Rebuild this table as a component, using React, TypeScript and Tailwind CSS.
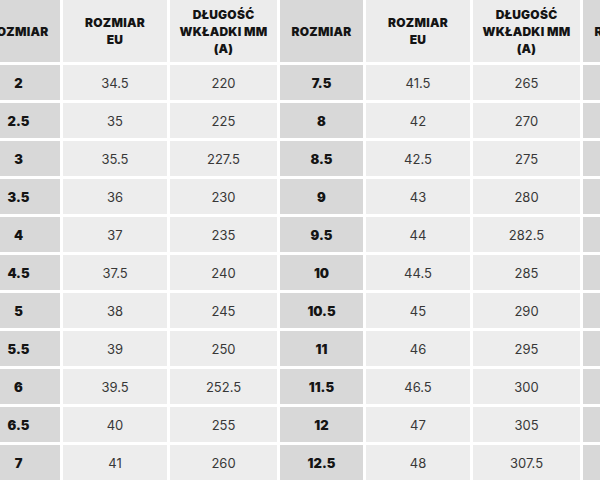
const rows: [string, string, string][][] = [
  [['2', '34.5', '220'], ['7.5', '41.5', '265'], ['13', '48.5', '310']],
  [['2.5', '35', '225'], ['8', '42', '270'], ['13.5', '49', '315']],
  [['3', '35.5', '227.5'], ['8.5', '42.5', '275'], ['14', '49.5', '320']],
  [['3.5', '36', '230'], ['9', '43', '280'], ['14.5', '50', '325']],
  [['4', '37', '235'], ['9.5', '44', '282.5'], ['15', '50.5', '330']],
  [['4.5', '37.5', '240'], ['10', '44.5', '285'], ['15.5', '51', '335']],
  [['5', '38', '245'], ['10.5', '45', '290'], ['16', '51.5', '340']],
  [['5.5', '39', '250'], ['11', '46', '295'], ['16.5', '52', '345']],
  [['6', '39.5', '252.5'], ['11.5', '46.5', '300'], ['17', '52.5', '350']],
  [['6.5', '40', '255'], ['12', '47', '305'], ['17.5', '53', '355']],
  [['7', '41', '260'], ['12.5', '48', '307.5'], ['18', '53.5', '360']],
];

const font = { fontFamily: 'Inter, "Liberation Sans", sans-serif' };

function HeaderGroup() {
  return (
    <>
      <div className="flex items-center justify-center bg-[#d8d8d8] text-center text-[12px] font-black leading-[17px] tracking-[0.02em] text-[#141414]">
        ROZMIAR
      </div>
      <div className="flex items-center justify-center bg-[#ececec] text-center text-[12px] font-black leading-[17px] tracking-[0.02em] text-[#141414]">
        ROZMIAR
        <br />
        EU
      </div>
      <div className="flex items-center justify-center bg-[#ececec] text-center text-[12px] font-black leading-[17px] tracking-[0.02em] text-[#141414]">
        DŁUGOŚĆ
        <br />
        WKŁADKI MM
        <br />
        (A)
      </div>
    </>
  );
}

export default function App() {
  return (
    <div className="h-[480px] w-[600px] overflow-hidden bg-white" style={font}>
      <div className="ml-[-23px] grid grid-cols-[83px_104px_107px_83px_104px_107px_83px_104px_107px] grid-rows-[62px] auto-rows-[35px] gap-[3px]">
        <HeaderGroup />
        <HeaderGroup />
        <HeaderGroup />
        {rows.map((row) =>
          row.map(([size, eu, mm]) => (
            <div key={size} className="contents">
              <div className="flex items-center justify-center bg-[#d8d8d8] pt-[3px] text-[13px] font-black text-[#141414]">
                {size}
              </div>
              <div className="flex items-center justify-center bg-[#ededed] pt-[3px] text-[13px] text-[#383838]">
                {eu}
              </div>
              <div className="flex items-center justify-center bg-[#ededed] pt-[3px] text-[13px] text-[#383838]">
                {mm}
              </div>
            </div>
          ))
        )}
      </div>
    </div>
  );
}
